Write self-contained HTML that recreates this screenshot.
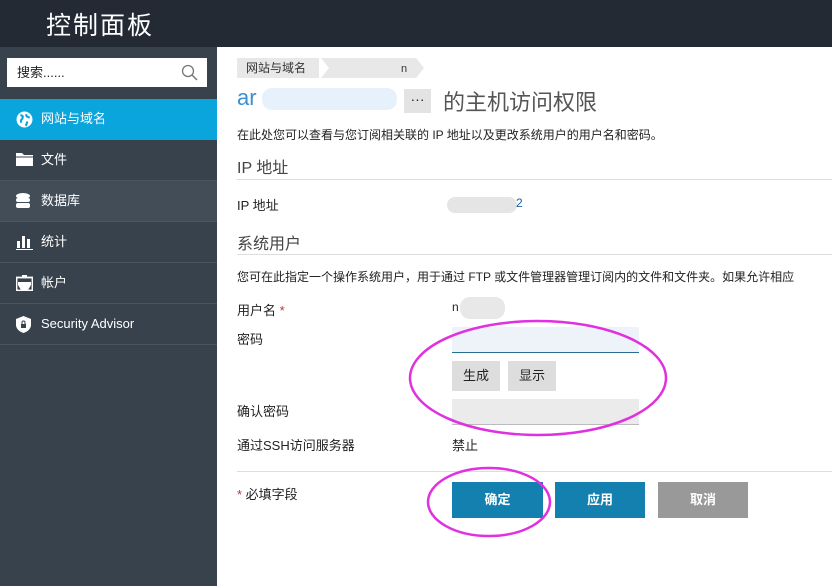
<!DOCTYPE html>
<html><head><meta charset="utf-8"><style>
*{margin:0;padding:0;box-sizing:border-box}
body{width:832px;height:586px;overflow:hidden;position:relative;background:#fff;font-family:"Liberation Sans","Noto Sans CJK SC",sans-serif;font-size:12px;color:#222}
.a{position:absolute}
#hd{left:0;top:0;width:832px;height:47px;background:#232a33}
#hd span{position:absolute;left:46px;top:6px;color:#fff;font-size:25px;letter-spacing:2px}
#sb{left:0;top:47px;width:217px;height:539px;background:#38424d}
.nav{position:absolute;left:0;width:217px;height:41px;border-bottom:1px solid #4a5560;color:#fff;font-size:13px;line-height:40px;padding-left:41px}
.nav svg{position:absolute;left:16px;top:12px}
.lb{font-size:13px}
.bt{position:absolute;color:#fff;font-weight:bold;font-size:13px;text-align:center;line-height:36px}
</style></head><body>
<div id="hd" class="a"><span>控制面板</span></div>
<div id="sb" class="a"></div>
<div class="a" style="left:7px;top:58px;width:200px;height:29px;background:#fff;font-size:13px;line-height:29px;padding-left:10px">搜索......
<svg class="a" style="left:174px;top:6px" width="18" height="18" viewBox="0 0 18 18"><circle cx="7" cy="7" r="5.5" fill="none" stroke="#777" stroke-width="1.3"/><line x1="11" y1="11" x2="16" y2="16" stroke="#777" stroke-width="1.5"/></svg></div>
<div class="nav" style="top:99px;background:#0aa5dc;border-bottom:none">网站与域名<svg width="17" height="17" viewBox="0 0 16 16"><circle cx="8" cy="8" r="7.5" fill="#fff"/><path d="M4 4c2 0 3 1 2 3s-2 1-1 4M10 3c-1 2 1 3 3 3M11 10c-1 1-1 3-2 4" stroke="#0aa5dc" stroke-width="2" fill="none"/></svg></div>
<div class="nav" style="top:140px">文件<svg width="17" height="15" viewBox="0 0 17 15"><path d="M0 1h6l2 2h9v11H0z" fill="#fff"/><path d="M0 5h17" stroke="#38424d"/></svg></div>
<div class="nav" style="top:181px;background:#434d58">数据库<svg width="14" height="16" viewBox="0 0 14 16"><ellipse cx="7" cy="3" rx="7" ry="3" fill="#fff"/><rect x="0" y="5" width="14" height="4" rx="2" fill="#fff"/><rect x="0" y="10" width="14" height="5" rx="2" fill="#fff"/></svg></div>
<div class="nav" style="top:222px">统计<svg width="17" height="16" viewBox="0 0 17 16"><rect x="1" y="7" width="3" height="7" fill="#fff"/><rect x="6" y="2" width="3" height="12" fill="#fff"/><rect x="11" y="5" width="3" height="9" fill="#fff"/><rect x="0" y="15" width="17" height="1" fill="#fff"/></svg></div>
<div class="nav" style="top:263px">帐户<svg width="17" height="16" viewBox="0 0 17 16"><rect x="0.5" y="2.5" width="16" height="13" fill="none" stroke="#fff" stroke-width="1.8"/><rect x="6" y="0" width="5" height="3" fill="#fff"/><path d="M2 7h13v3l-3 5H5l-3-5z" fill="#fff"/></svg></div>
<div class="nav" style="top:304px">Security Advisor<svg width="15" height="17" viewBox="0 0 15 17"><path d="M7.5 0L15 3v6c0 4-4 7-7.5 8C4 16 0 13 0 9V3z" fill="#fff"/><rect x="5" y="8" width="5" height="4" fill="#38424d"/><path d="M6 8V6.5a1.5 1.5 0 0 1 3 0V8" stroke="#38424d" fill="none"/></svg></div>

<div class="a" style="left:237px;top:58px;width:82px;height:20px;background:#e8e8e8;font-size:12px;line-height:20px;padding-left:9px;color:#333">网站与域名</div>
<svg class="a" style="left:319px;top:58px" width="110" height="20"><path d="M0 0l8 10-8 10h95l8-10-8-10z" fill="#e8e8e8" transform="translate(2,0)"/><text x="82" y="14" font-size="11" fill="#333" font-family="Liberation Sans">n</text></svg>
<div class="a" style="left:237px;top:85px;font-size:22px;color:#3c8fd0">ar</div>
<div class="a" style="left:262px;top:88px;width:135px;height:22px;background:#e7f1fb;border-radius:10px"></div>
<div class="a" style="left:404px;top:89px;width:27px;height:24px;background:#e3e3e3;text-align:center;line-height:20px;font-size:14px">···</div>
<div class="a" style="left:443px;top:85px;font-size:22px;color:#555">的主机访问权限</div>
<div class="a" style="left:237px;top:126px">在此处您可以查看与您订阅相关联的 IP 地址以及更改系统用户的用户名和密码。</div>
<div class="a" style="left:237px;top:154px;font-size:16px;color:#444">IP 地址</div>
<div class="a" style="left:237px;top:179px;width:595px;height:1px;background:#ddd"></div>
<div class="a lb" style="left:237px;top:195px">IP 地址</div>
<div class="a" style="left:447px;top:197px;width:70px;height:16px;background:#e5e5e5;border-radius:8px"></div>
<div class="a" style="left:516px;top:196px;color:#1a5fa6;font-size:12px">2</div>
<div class="a" style="left:237px;top:230px;font-size:16px;color:#444">系统用户</div>
<div class="a" style="left:237px;top:254px;width:595px;height:1px;background:#ddd"></div>
<div class="a" style="left:237px;top:268px;white-space:nowrap">您可在此指定一个操作系统用户，用于通过 FTP 或文件管理器管理订阅内的文件和文件夹。如果允许相应</div>
<div class="a lb" style="left:237px;top:300px">用户名 <span style="color:#b33">*</span></div>
<div class="a" style="left:452px;top:300px">n</div>
<div class="a" style="left:460px;top:297px;width:45px;height:22px;background:#e8e8e8;border-radius:10px"></div>
<div class="a lb" style="left:237px;top:329px">密码</div>
<div class="a" style="left:452px;top:327px;width:187px;height:26px;background:#edf3f9;border-bottom:1px solid #2a6e8e"></div>
<div class="a" style="left:452px;top:361px;width:48px;height:30px;background:#ddd;text-align:center;line-height:30px;font-size:13px">生成</div>
<div class="a" style="left:508px;top:361px;width:48px;height:30px;background:#ddd;text-align:center;line-height:30px;font-size:13px">显示</div>
<div class="a lb" style="left:237px;top:401px">确认密码</div>
<div class="a" style="left:452px;top:399px;width:187px;height:26px;background:#ebebeb;border-bottom:1px solid #bbb"></div>
<div class="a lb" style="left:237px;top:435px">通过SSH访问服务器</div>
<div class="a lb" style="left:452px;top:435px">禁止</div>
<div class="a" style="left:237px;top:471px;width:595px;height:1px;background:#ddd"></div>
<div class="a lb" style="left:237px;top:484px"><span style="color:#b33">*</span> 必填字段</div>
<div class="bt" style="left:452px;top:482px;width:91px;height:36px;background:#1380b0">确定</div>
<div class="bt" style="left:555px;top:482px;width:90px;height:36px;background:#1380b0">应用</div>
<div class="bt" style="left:658px;top:482px;width:90px;height:36px;background:#999">取消</div>
<svg class="a" style="left:0;top:0" width="832" height="586"><ellipse cx="538" cy="378" rx="128" ry="57" fill="none" stroke="#e030e0" stroke-width="2.5"/><ellipse cx="489" cy="502" rx="61" ry="34" fill="none" stroke="#e030e0" stroke-width="2.5"/></svg>
</body></html>
